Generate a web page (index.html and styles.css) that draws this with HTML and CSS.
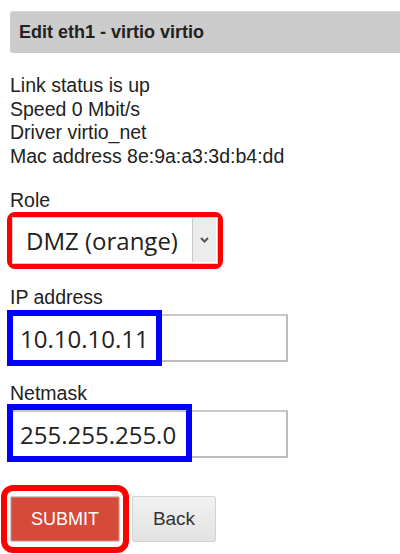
FILE: index.html
```html
<!DOCTYPE html>
<html lang="en">
<head>
    <meta charset="UTF-8">
    <meta name="viewport" content="width=device-width, initial-scale=1.0">
    <title>Edit eth1</title>
    <link rel="stylesheet" href="styles.css">
</head>
<body>

    <div class="panel">
        <div class="panel-header">Edit eth1 - virtio virtio</div>

        <div class="status">
            <div>Link status is up</div>
            <div>Speed 0 Mbit/s</div>
            <div>Driver virtio_net</div>
            <div>Mac address 8e:9a:a3:3d:b4:dd</div>
        </div>

        <form class="iface-form" onsubmit="return false;">
            <label class="field-label">Role</label>
            <div class="mark-red select-mark">
                <div class="select-box">
                    <span class="select-value">DMZ (orange)</span>
                    <span class="select-arrow">
                        <svg width="9" height="6" viewBox="0 0 9 6">
                            <path d="M1 1 L4.5 4.5 L8 1" fill="none" stroke="#555" stroke-width="2"/>
                        </svg>
                    </span>
                </div>
            </div>

            <label class="field-label ip-label" for="ip">IP address</label>
            <div class="field">
                <input type="text" id="ip" value="10.10.10.11">
                <span class="mark-blue ip-mark"></span>
            </div>

            <label class="field-label mask-label" for="netmask">Netmask</label>
            <div class="field">
                <input type="text" id="netmask" value="255.255.255.0">
                <span class="mark-blue mask-mark"></span>
            </div>

            <div class="actions">
                <span class="mark-red submit-mark">
                    <button class="btn-submit">SUBMIT</button>
                </span>
                <button class="btn-back">Back</button>
            </div>
        </form>
    </div>

</body>
</html>
```

FILE: styles.css
```css
/* General styling */
body {
    font-family: "Liberation Sans", Arial, sans-serif;
    margin: 0;
    padding: 0;
    background: #ffffff;
    color: #222;
}

.panel {
    padding-top: 11px;
}

.panel-header {
    margin-left: 10px;
    height: 42px;
    padding-left: 9px;
    display: flex;
    align-items: center;
    background: #cccccc;
    border-top: 1px solid #d6d6d6;
    box-sizing: border-box;
    border-radius: 3px 0 0 3px;
    font-size: 18px;
    font-weight: bold;
    color: #222;
}

.status {
    margin: 21px 0 0 10px;
    font-size: 19.5px;
    line-height: 23.5px;
}

.iface-form {
    margin-left: 10px;
    margin-top: 21px;
}

.field-label {
    display: block;
    font-size: 19.5px;
    line-height: 22px;
}

.ip-label {
    margin-top: 17px;
}

.mask-label {
    margin-top: 20px;
}

/* Red / blue highlight marks */
.mark-red {
    border: 5px solid #ff0000;
    border-radius: 8px;
}

.mark-blue {
    position: absolute;
    border: 6px solid #0000ff;
    box-sizing: border-box;
}

/* Select */
.select-mark {
    display: inline-block;
    margin: 1px 0 0 -3px;
}

.select-box {
    display: flex;
    align-items: stretch;
    width: 206px;
    height: 47px;
    box-sizing: border-box;
    border: 1px solid #d0d0d0;
    background: #fff;
}

.select-value {
    flex: 1;
    display: flex;
    align-items: center;
    padding-left: 13px;
    font-family: "Open Sans", sans-serif;
    font-size: 24px;
    color: #222;
}

.select-arrow {
    width: 23px;
    margin: 0 1px 1px 0;
    display: flex;
    align-items: center;
    justify-content: center;
    background: #ececec;
    border-left: 1px solid #c8c8c8;
}

/* Text inputs */
.field {
    position: relative;
    margin-top: 6px;
}

.field input {
    display: block;
    width: 278px;
    height: 48px;
    box-sizing: border-box;
    padding: 0 0 0 8px;
    border: 2px solid #bdbdbd;
    border-top-color: #c8c8c8;
    font-family: "Open Sans", sans-serif;
    font-size: 24px;
    color: #222;
    outline: none;
}

.ip-mark {
    left: -3px;
    top: -4px;
    width: 155px;
    height: 56px;
}

.mask-mark {
    left: -3px;
    top: -6px;
    width: 185px;
    height: 58px;
}

/* Buttons */
.actions {
    margin-top: 27px;
    margin-left: -9px;
    display: flex;
    align-items: center;
}

.submit-mark {
    display: inline-block;
    border-width: 6px;
    border-radius: 12px;
    padding: 5px 3px;
}

.btn-submit {
    display: block;
    width: 110px;
    height: 46px;
    background: #d64a3a;
    color: #fff;
    border: 1px solid #c9c9c9;
    border-radius: 2px;
    box-shadow: inset 0 0 0 1px #dd7063;
    font-family: "Liberation Sans", Arial, sans-serif;
    font-size: 18px;
    cursor: pointer;
}

.btn-back {
    margin-left: 3px;
    width: 84px;
    height: 46px;
    background: linear-gradient(#f2f2f2, #e2e2e2);
    color: #333;
    border: 1px solid #d2d2d2;
    border-radius: 2px;
    font-family: "Liberation Sans", Arial, sans-serif;
    font-size: 19px;
    cursor: pointer;
}
```
